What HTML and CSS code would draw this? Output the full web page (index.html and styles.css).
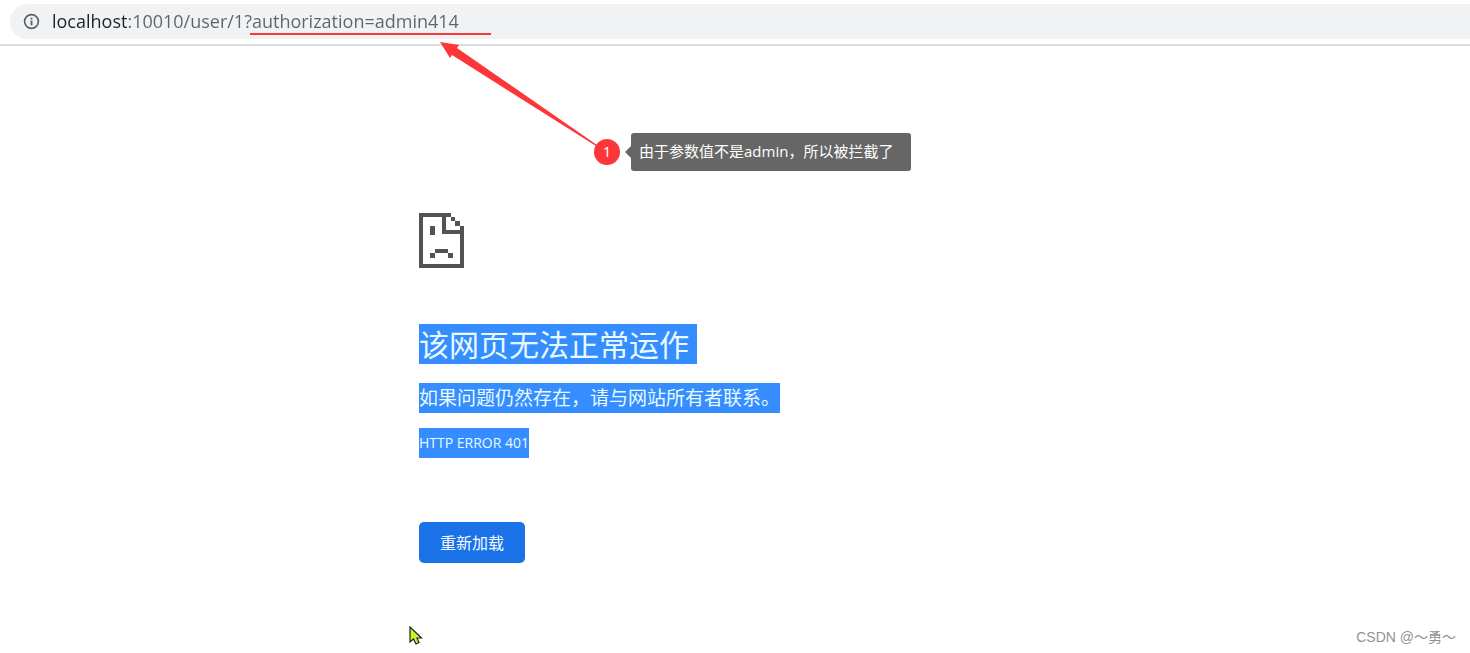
FILE: index.html
```html
<!DOCTYPE html>
<html lang="zh-CN">
<head>
<meta charset="utf-8">
<title>localhost</title>
<link rel="stylesheet" href="styles.css">
</head>
<body>
<header class="toolbar">
  <form class="omnibox">
    <svg class="info" viewBox="0 0 18 18" aria-hidden="true"><circle cx="9" cy="9" r="7.3" fill="none" stroke="#5f6368" stroke-width="1.8"/><path d="M8 8h2v5H8zM8 5h2v2H8z" fill="#5f6368"/></svg>
    <input class="address" type="text" aria-label="地址" value="localhost:10010/user/1?authorization=admin414">
  </form>
</header>
<main class="error">
  <svg class="sad" viewBox="0 0 45 55" aria-hidden="true" shape-rendering="crispEdges">
    <path fill="#535353" d="M0 0H32V4H27V17H45V55H0ZM4 4V51H41V21H23V4Z" fill-rule="evenodd"/>
    <path fill="#535353" d="M32 4h4v4h-4zM36 8h5v5h-5zM41 13h4v4h-4zM11 13h5v9h-5zM16 36h13v4H16zM11 40h5v5h-5zM29 40h5v5h-5z"/>
  </svg>
  <h1 class="title"><span class="selected">该网页无法正常运作</span></h1>
  <p class="summary"><span class="selected">如果问题仍然存在，请与网站所有者联系。</span></p>
  <p class="code"><span class="selected">HTTP ERROR 401</span></p>
  <button class="reload" type="button">重新加载</button>
</main>
<svg class="marks" viewBox="0 0 1470 653" aria-hidden="true">
  <path d="M250 33H491V35H250Z" fill="#fd3739" shape-rendering="crispEdges"/>
  <path d="M440 42L459 45L457 48L597 145L596 146L452 55L450 58Z" fill="#fd3739"/>
</svg>
<div class="note">
  <span class="step">1</span>
  <span class="bubble">由于参数值不是admin，所以被拦截了</span>
</div>
<svg class="cursor" viewBox="0 0 14 20" aria-hidden="true"><path d="M1 1V16L4.500 13L7 18L10 16.500L8 12H12.500Z" fill="#c8f52a" stroke="#222" stroke-width="1.200"/></svg>
<div class="watermark">CSDN @～勇～</div>
</body>
</html>
```
FILE: styles.css
```css
* { box-sizing: border-box; }
body {
  margin: 0;
  min-height: 100vh;
  position: relative;
  overflow: hidden;
  background: #fff;
  font-family: "Open Sans", "Noto Sans CJK SC", sans-serif;
}
.toolbar {
  height: 46px;
  padding: 4px 0 5px 10px;
  border-bottom: 2px solid #dadcde;
}
.omnibox {
  display: flex;
  align-items: center;
  gap: 12px;
  height: 35px;
  padding-left: 13px;
  border-radius: 18px 0 0 18px;
  background: #f0f2f4;
}
.info { width: 17px; height: 17px; flex: none; }
.address {
  flex: 1;
  min-width: 0;
  height: 35px;
  padding: 0 0 2px;
  border: 0;
  outline: 0;
  font: 18px/24px "Open Sans", sans-serif;
  color: transparent;
  background: linear-gradient(90deg, #202124 76px, #606367 76px);
  background-clip: text;
  -webkit-background-clip: text;
}
.error {
  max-width: 632px;
  margin: 0 auto;
  padding-top: 167px;
}
.sad { display: block; width: 45px; height: 55px; }
.selected { display: inline-block; vertical-align: top; background: #358dff; color: #e8fbff; }
.title, .summary, .code { margin: 0; font-weight: 400; }
.title { margin-top: 56px; font-size: 30px; line-height: 38px; }
.title .selected { padding: 2px 8px 0 0; }
.summary { margin-top: 19px; font-size: 19px; line-height: 30px; }
.code { margin-top: 15px; font-size: 14px; line-height: 30px; }
.reload {
  display: block;
  margin-top: 64px;
  padding: 0 21px;
  height: 41px;
  border: 0;
  border-radius: 5px;
  background: #1b72e8;
  color: #f0fbff;
  font: 16px/24px "Open Sans", "Noto Sans CJK SC", sans-serif;
}
.marks { position: absolute; left: 0; top: 0; width: 1470px; height: 653px; pointer-events: none; }
.note {
  position: absolute;
  left: 594px;
  top: 133px;
  display: flex;
  align-items: center;
  gap: 11px;
}
.step {
  width: 26px;
  height: 26px;
  border-radius: 50%;
  background: #fd3739;
  color: #fff;
  font-size: 15px;
  line-height: 24px;
  text-align: center;
}
.bubble {
  position: relative;
  padding: 6px 18px 8px 8px;
  border-radius: 3px;
  background: #666;
  color: #fff;
  font-size: 15px;
  line-height: 24px;
  white-space: nowrap;
}
.bubble::before {
  content: "";
  position: absolute;
  left: -6px;
  top: 13px;
  border: 6px solid transparent;
  border-left: 0;
  border-right-color: #666;
}
.cursor { position: absolute; left: 409px; top: 626px; width: 14px; height: 20px; }
.watermark {
  position: absolute;
  right: 14px;
  bottom: 6px;
  color: #929292;
  font: 14px/20px "Liberation Sans", "Noto Sans CJK SC", sans-serif;
}
```
